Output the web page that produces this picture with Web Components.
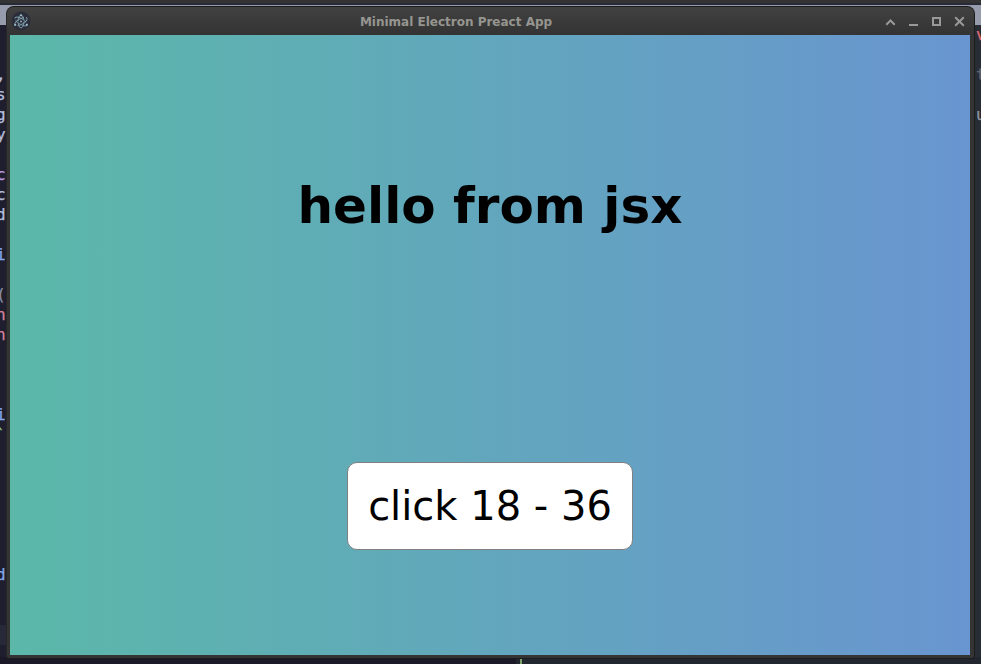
<!DOCTYPE html>
<html lang="en"><head><meta charset="utf-8"><title>Minimal Electron Preact App</title>
<style>html,body{margin:0;width:981px;height:664px;overflow:hidden;background:#1e1e2e}</style></head>
<body><desk-top></desk-top>
<script>
const define=(name,html,setup)=>customElements.define(name,class extends HTMLElement{
  constructor(){super();const t=document.createElement('template');t.innerHTML=html;
    this.attachShadow({mode:'open'}).append(t.content.cloneNode(true));}
  connectedCallback(){if(setup)setup(this);}
});
define('code-edge',`<style>
:host{display:flex;flex-direction:column;overflow:hidden;box-sizing:border-box;font:16px/20px "DejaVu Sans Mono",monospace;color:#b4bfdf}
div{height:20px;flex:none;white-space:pre;-webkit-text-stroke:.25px currentColor}
:host([side=left]) div{align-self:flex-start;margin-left:-4px}
</style>`,el=>{
  for(const row of JSON.parse(el.getAttribute('rows'))){
    const d=document.createElement('div');d.textContent=row[0]||'';if(row[1])d.style.color=row[1];el.shadowRoot.append(d);
  }});
define('electron-icon',`<style>:host{display:block;width:20px;height:20px}svg{display:block}</style>
<svg width="20" height="20" viewBox="0 0 20 20"><circle cx="10" cy="10" r="9.5" fill="#2b2e3a"/>
<g fill="none" stroke="#81a1ae" stroke-width="1" stroke-opacity=".9"><ellipse cx="10" cy="10.5" rx="6.8" ry="2.8" transform="rotate(30 10 10.5)" stroke-dasharray="13 2"/><ellipse cx="10" cy="10.5" rx="6.8" ry="2.8" transform="rotate(-30 10 10.5)" stroke-dasharray="13 2"/><ellipse cx="10" cy="10.5" rx="3" ry="6.4" stroke-dasharray="13 2"/></g>
<g fill="#9ab9c4"><circle cx="10" cy="10.5" r=".9"/><circle cx="10" cy="4.3" r="1.1"/><circle cx="4.2" cy="13.8" r="1.1"/><circle cx="15.8" cy="13.8" r="1.1"/></g></svg>`);
define('window-controls',`<style>:host{display:block}svg{display:block}</style>
<svg width="82" height="12" viewBox="0 0 82 12" fill="none" stroke="#999" stroke-width="2"><path d="M1.3 9.7 5.5 5.5l4.2 4.2"/><path d="M24 10h9"/><path d="M48 3h7v7h-7z"/><path d="M70.2 2.2l8.6 8.6m0-8.6-8.6 8.6"/></svg>`);
define('title-bar',`<style>:host{display:grid;grid-template-columns:110px 1fr 176px;align-items:center;height:28px;background:linear-gradient(#414141,#333);box-sizing:border-box;padding:0 7px 0 4px}
h1{margin:0;padding-top:2px;text-align:center;font:bold 12px/16px "DejaVu Sans",sans-serif;color:#969590;white-space:nowrap}window-controls{justify-self:end}</style>
<electron-icon></electron-icon><h1><slot></slot></h1><window-controls></window-controls>`);
define('click-button',`<style>:host{display:block}button{display:block;box-sizing:border-box;width:286px;height:88px;margin:0;padding:20px 0;border:1px solid #808080;border-radius:10px;background:#fff;color:#000;font:40px/46px "DejaVu Sans",sans-serif;white-space:nowrap}</style><button><slot></slot></button>`);
define('app-view',`<style>:host{display:flex;flex-direction:column;align-items:center;box-sizing:border-box;height:620px;padding-top:142px;background:linear-gradient(90deg,#5bb8a9,#6995d0)}
h2{margin:0 0 227px;font:bold 50px/58px "DejaVu Sans",sans-serif;color:#000}</style>
<h2>hello from jsx</h2><click-button>click 18 - 36</click-button>`);
define('app-window',`<style>:host{display:block;box-sizing:border-box;width:969px;height:653px;border:1px solid #1c1c1c;border-left-color:#262626;border-radius:8px 8px 3px 3px;background:#343434;overflow:hidden}
app-view{margin:0 4px 0 3px}</style><title-bar>Minimal Electron Preact App</title-bar><app-view></app-view>`);
define('desk-top',`<style>
:host{display:block;position:relative;width:981px;height:664px;overflow:hidden;background:#1e1e2e}
.back{display:grid;grid-template:3px 2px 20px 632px 7px / 8px 1fr 8px;width:981px;height:664px}
.top{grid-column:1/4;background:#343434}.shade{grid-column:1/4;background:#282b36}.tabs{grid-column:1/4;background:#969cac}
.left{grid-column:1;background:linear-gradient(#282938,#282938) 0 600px/8px 20px no-repeat #1e1e2e;padding-top:40px}
.mid{background:#1e1e2e}.right{background:#282c34;padding:0 0 0 3px}
.foot{grid-column:1/4;display:grid;grid-template-columns:516px 4px 2px 1fr}.foot i:nth-child(1){background:#1b1928}.foot i:nth-child(2),.foot i:nth-child(4){background:#22262e}.foot i:nth-child(3){background:#7d9f6b}
app-window{position:absolute;left:6px;top:6px}
</style>
<div class="back"><div class="top"></div><div class="shade"></div><div class="tabs"></div>
<code-edge class="left" side="left" rows='[[","],["s"],["g"],["y"],[],["c","#b99be0"],["c"],["d"],[],["i","#83a8ec"],[],["(","#8b91aa"],["n","#d7829d"],["n","#d7829d"],[],[],[],["i","#83a8ec"],["\u0060","#93cf8d"],[],[],[],[],[],[],["d","#83a8ec"]]'></code-edge>
<div class="mid"></div><code-edge class="right" rows='[["v","#e06c75"],[],["t","#606570"],[],["u","#9298a4"]]'></code-edge>
<div class="foot"><i></i><i></i><i></i><i></i></div></div>
<app-window></app-window>`);
</script></body></html>
